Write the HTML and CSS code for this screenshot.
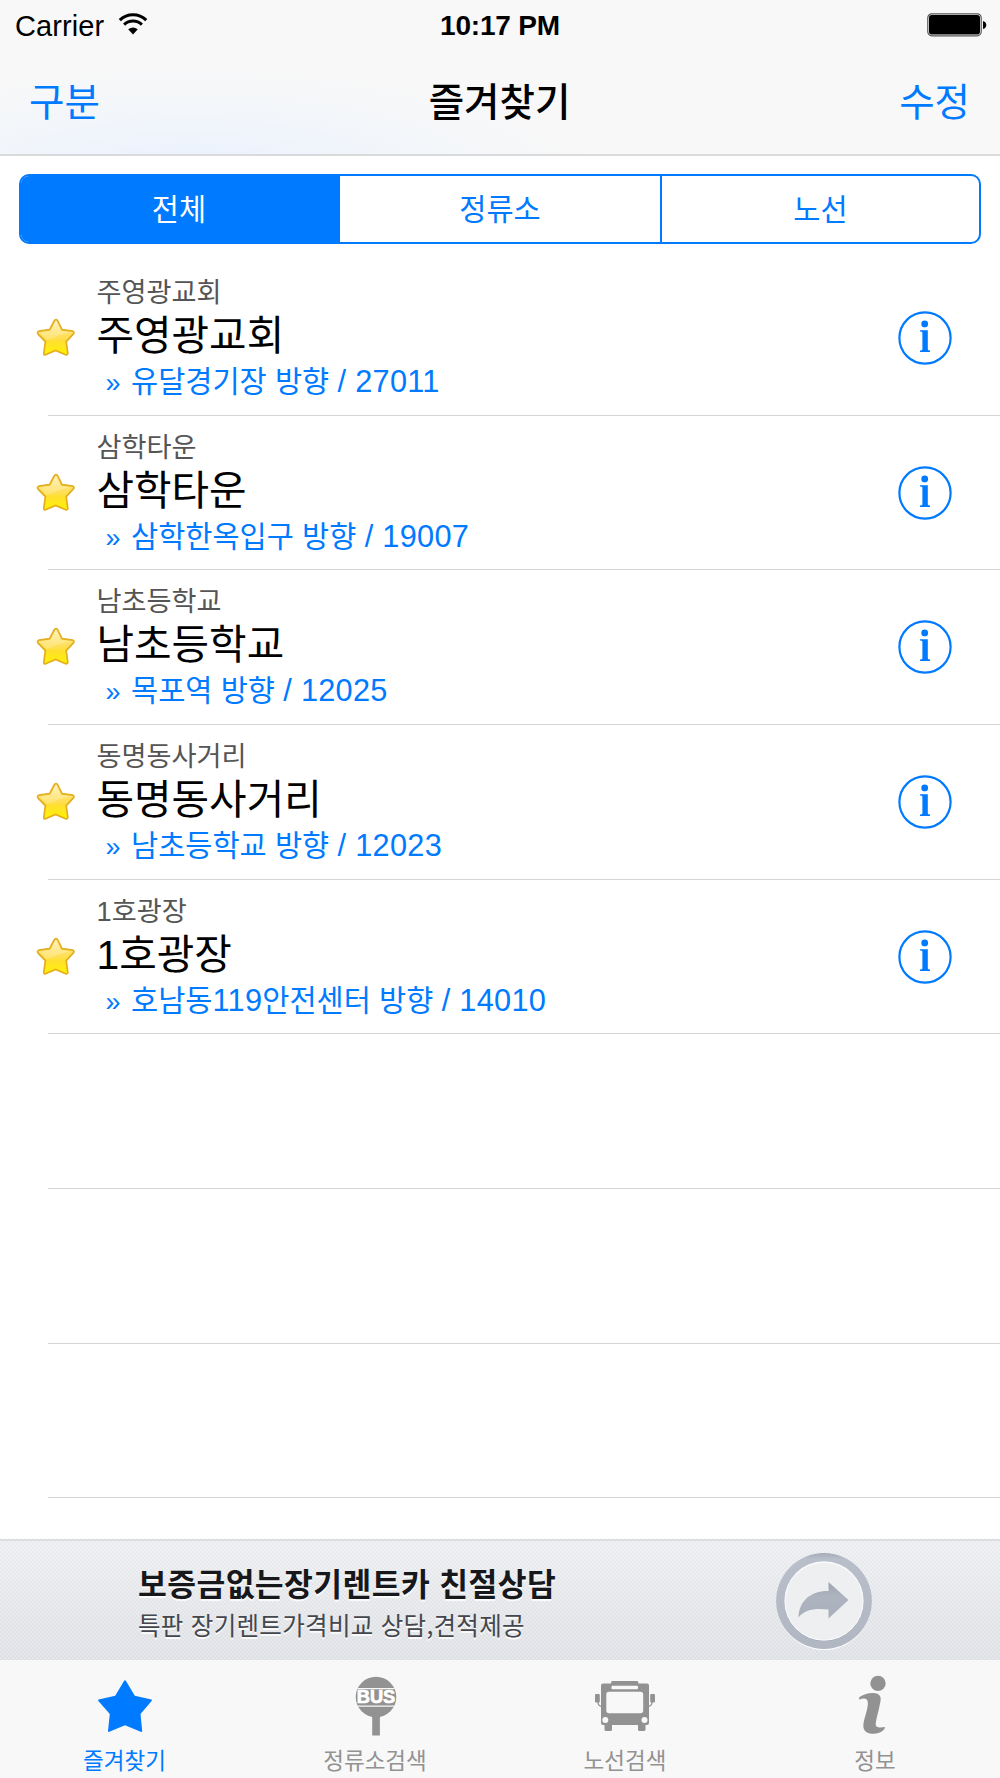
FILE: index.html
```html
<!DOCTYPE html>
<html lang="ko">
<head>
<meta charset="utf-8">
<title>즐겨찾기</title>
<link rel="stylesheet" href="styles.css">
</head>
<body>
<svg class="defs" width="0" height="0" aria-hidden="true">
  <defs>
    <linearGradient id="gold" x1="0" y1="0" x2="0" y2="1">
      <stop offset="0" stop-color="#fff0b4"/>
      <stop offset=".5" stop-color="#ffdf55"/>
      <stop offset=".62" stop-color="#ffe030"/>
      <stop offset="1" stop-color="#fff200"/>
    </linearGradient>
    <symbol id="fav" viewBox="0 0 40 40">
      <path d="M20 2.7 Q21.2 2.7 21.8 4 L26 12.6 L36.8 14.2 Q38.8 15 37.4 16.9 L30.2 24.6 L31.8 36.2 Q31.6 38.3 29.6 37.8 L19.6 33.4 L9.6 37.8 Q7.6 38.2 7.8 36 L9.4 24.6 L1.9 16.9 Q.8 15 2.8 14.2 L13.6 12.6 L18.2 4 Q18.9 2.7 20 2.7Z" fill="url(#gold)" stroke="#e3ae20" stroke-width="1.7"/>
      <path d="M20 5 L24.6 14 L35 15.8 Q27 16 19 20 Q12 23.500 10.500 22.800 L4 15.800 L14.800 14Z" fill="#fff" opacity=".2"/>
    </symbol>
    <symbol id="info" viewBox="0 0 54 54">
      <circle cx="27" cy="27" r="25.600" fill="none" stroke="#007aff" stroke-width="2.200"/>
      <circle cx="26.700" cy="12.900" r="3.400" fill="#007aff"/>
      <path d="M22 19.200 H29.800 V38.600 Q29.900 39.500 32 39.500 V41 H22 V39.500 Q24.400 39.500 24.400 38.600 V21.600 Q24.400 20.600 22 20.500Z" fill="#007aff"/>
    </symbol>
  </defs>
</svg>
<div class="screen">
  <header class="top">
    <div class="status">
      <div class="carrier"><span>Carrier</span>
        <svg class="wifi" width="30" height="22" viewBox="0 0 30 22">
          <path d="M1.800 7.100 A19 19 0 0 1 28.200 7.100" fill="none" stroke="#000" stroke-width="3.100"/>
          <path d="M6.100 11.600 A12.800 12.800 0 0 1 23.900 11.600" fill="none" stroke="#000" stroke-width="2.900"/>
          <path d="M10.200 16.300 Q15 12.600 19.800 16.300 L15 21.600Z"/>
        </svg>
      </div>
      <div class="clock">10:17 PM</div>
      <svg class="battery" width="60" height="24" viewBox="0 0 60 24">
        <rect x=".8" y=".8" width="53.400" height="22" rx="4" fill="#fff" stroke="#555" stroke-width="1.200"/>
        <rect x="2" y="2" width="51" height="19.600" rx="2.800"/>
        <path d="M56 8 Q59.300 9 59.300 12 Q59.300 15 56 16Z"/>
      </svg>
    </div>
    <nav class="navbar"><a class="left">구분</a><h1>즐겨찾기</h1><a class="right">수정</a></nav>
  </header>

  <div class="segments"><span class="on">전체</span><span>정류소</span><span>노선</span></div>

  <main class="list">
    <div class="row"><svg class="fav"><use href="#fav"/></svg>
      <div class="text"><p class="sub">주영광교회</p><p class="name">주영광교회</p><p class="dir"><i>»</i>유달경기장 방향 <b>/ 27011</b></p></div>
      <svg class="info"><use href="#info"/></svg></div>
    <div class="row"><svg class="fav"><use href="#fav"/></svg>
      <div class="text"><p class="sub">삼학타운</p><p class="name">삼학타운</p><p class="dir"><i>»</i>삼학한옥입구 방향 <b>/ 19007</b></p></div>
      <svg class="info"><use href="#info"/></svg></div>
    <div class="row"><svg class="fav"><use href="#fav"/></svg>
      <div class="text"><p class="sub">남초등학교</p><p class="name">남초등학교</p><p class="dir"><i>»</i>목포역 방향 <b>/ 12025</b></p></div>
      <svg class="info"><use href="#info"/></svg></div>
    <div class="row"><svg class="fav"><use href="#fav"/></svg>
      <div class="text"><p class="sub">동명동사거리</p><p class="name">동명동사거리</p><p class="dir"><i>»</i>남초등학교 방향 <b>/ 12023</b></p></div>
      <svg class="info"><use href="#info"/></svg></div>
    <div class="row"><svg class="fav"><use href="#fav"/></svg>
      <div class="text"><p class="sub"><b>1</b>호광장</p><p class="name"><b>1</b>호광장</p><p class="dir"><i>»</i>호남동<b>119</b>안전센터 방향 <b>/ 14010</b></p></div>
      <svg class="info"><use href="#info"/></svg></div>
    <div class="row"></div>
    <div class="row"></div>
    <div class="row"></div>
  </main>

  <aside class="ad">
    <div class="copy"><p class="head">보증금없는장기렌트카 친절상담</p><p class="desc">특판 장기렌트가격비교 상담,견적제공</p></div>
    <svg class="share" width="100" height="100" viewBox="0 0 100 100">
      <defs>
        <linearGradient id="ring" x1="0" y1="0" x2="0" y2="1"><stop offset="0" stop-color="#a5abb5"/><stop offset=".06" stop-color="#b8bfcb"/><stop offset="1" stop-color="#b0b7c2"/></linearGradient>
        <linearGradient id="arrow" x1="0" y1="0" x2="0" y2="1"><stop offset="0" stop-color="#9fa5af"/><stop offset=".4" stop-color="#adb4bf"/><stop offset="1" stop-color="#a9b0bb"/></linearGradient>
      </defs>
      <circle cx="50" cy="51.500" r="47.500" fill="#fafbfc"/>
      <circle cx="50" cy="50" r="47.900" fill="url(#ring)"/>
      <circle cx="50" cy="50.500" r="39.700" fill="#9ea5b0"/>
      <circle cx="50" cy="50" r="39.700" fill="#fafafb"/>
      <circle cx="50" cy="50.300" r="38.500" fill="#eeeff1"/>
      <path d="M24.500 66.500 C25 49 38 39.500 54.500 40 V31 L74.500 49 L54.500 67.500 V58.500 C42 57 31 58 24.500 66.500Z" fill="url(#arrow)"/>
    </svg>
  </aside>

  <footer class="tabs">
    <div class="tab active">
      <svg width="60" height="60" viewBox="0 0 60 60"><path d="M30 4.300 Q30.700 4.300 31 5 L39.800 19.800 L56.400 23.600 Q57.500 24 56.600 25 L45.500 38 L47.200 55 Q47 56.400 45.700 55.800 L30 49.300 L14.300 55.800 Q13 56.300 13 55 L14.800 38 L3.400 25 Q2.600 24 3.700 23.600 L20.200 19.800 L29 5 Q29.300 4.300 30 4.300Z" fill="#007aff"/></svg>
      <span>즐겨찾기</span></div>
    <div class="tab">
      <svg width="60" height="60" viewBox="0 0 60 60"><circle cx="31" cy="21" r="20.300" fill="#929292"/><path d="M27.200 38 H34.900 V59.500 H27.200Z" fill="#929292"/><path d="M12.500 12.700 H49.500 M12.500 30.200 H49.500" stroke="#f8f8f8" stroke-width="1.300"/><text x="31" y="27.300" text-anchor="middle" textLength="38.500" lengthAdjust="spacingAndGlyphs" class="bus">BUS</text></svg>
      <span>정류소검색</span></div>
    <div class="tab">
      <svg width="60" height="60" viewBox="0 0 60 60" fill="#929292"><path fill-rule="evenodd" d="M17 5 H42 Q43.500 5 43.500 7.500 H52 Q54 7.500 54 9.500 V47 Q54 49 52 49 H50.500 V53.500 Q50.500 55 49 55 H44.500 Q43 55 43 53.500 V49 H17 V53.500 Q17 55 15.500 55 H11 Q9.500 55 9.500 53.500 V49 H8 Q6 49 6 47 V9.500 Q6 7.500 8 7.500 H16 Q16 5 17 5Z M17.500 9.700 Q16.500 9.700 16.500 10.700 V12.300 Q16.500 13.300 17.500 13.300 H42 Q43 13.300 43 12.300 V10.700 Q43 9.700 42 9.700Z M14 15.700 Q11.300 15.700 11.300 18.400 V34.500 Q11.300 37.200 14 37.200 H45.500 Q48.200 37.200 48.200 34.500 V18.400 Q48.200 15.700 45.500 15.700Z"/><rect y="18" width="4.800" height="8.500" rx="1"/><rect x="55.200" y="18" width="4.800" height="8.500" rx="1"/><path d="M3 26 Q3 30 7 30.500 M57 26 Q57 30 53 30.500" fill="none" stroke="#929292" stroke-width="1.300"/><circle cx="10.300" cy="44" r="3" fill="#f8f8f8"/><circle cx="49.500" cy="44" r="3" fill="#f8f8f8"/></svg>
      <span>노선검색</span></div>
    <div class="tab">
      <svg width="60" height="60" viewBox="0 0 60 60" fill="#929292"><circle cx="33" cy="7.400" r="7.700"/><path d="M14.200 21.300 C20 17.500 25 17 28 17 C34 17 36.500 20 35.500 25 C34 34 31 43 30.700 48 C30.600 52.500 36 51.500 40 51 L39.300 53.200 C36 57 31 58 27 57.700 C20.500 57.500 17.500 53.500 18.500 47.500 C19.500 41 22.800 34 22.900 27 C22.800 22 19 21.800 14.200 23.700Z"/></svg>
      <span>정보</span></div>
  </footer>
</div>
</body>
</html>
```
FILE: styles.css
```css
* { box-sizing: border-box; margin: 0; padding: 0; }
body { background: #fff; font-family: "Noto Sans CJK KR", sans-serif; color: #000; }
.defs { display: block; height: 0; }
.screen { width: 1000px; height: 1778px; display: flex; flex-direction: column; overflow: hidden; }

.top {
  height: 156px; flex: none; border-bottom: 2px solid #d9dadb;
  background: radial-gradient(ellipse 400px 110px at 190px 175px, #edf3fd 25%, rgba(240, 245, 251, .7) 55%, rgba(248, 248, 248, 0) 100%), #f8f8f8;
}
.status { height: 50px; display: grid; grid-template-columns: 1fr auto 1fr; align-items: center; padding: 2px 13px 0 15px; font-family: "Liberation Sans", sans-serif; }
.carrier { display: flex; align-items: center; gap: 14px; font-size: 29px; letter-spacing: .1px; }
.wifi { margin-top: -5px; }
.clock { font-size: 28px; font-weight: bold; letter-spacing: -.2px; margin-right: 2px; }
.battery { justify-self: end; margin-top: -2px; }
.navbar { height: 104px; display: grid; grid-template-columns: 1fr auto 1fr; align-items: center; padding: 0 30px 6px 29px; font-size: 38.500px; line-height: 60px; }
.navbar a { color: #007aff; }
.navbar .right { text-align: right; }
.navbar h1 { font-size: 38.500px; font-weight: 500; line-height: 60px; }

.segments { flex: none; height: 70px; margin: 18px 19px 17px; display: grid; grid-template-columns: 319px 320px 1fr; border: 2px solid #007aff; border-radius: 10px; overflow: hidden; }
.segments span { display: flex; align-items: center; justify-content: center; color: #007aff; font-size: 29.500px; line-height: 40px; padding-bottom: 5px; }
.segments span + span + span { border-left: 2px solid #007aff; }
.segments .on { background: #007aff; color: #fff; padding-right: 3px; }

.list { flex: 1; min-height: 0; }
.row { height: 154.660px; margin-left: 48px; padding-right: 48px; display: flex; border-bottom: 1.500px solid #d4d4d4; }
.fav { width: 40px; height: 40px; margin: 56px 0 0 -12px; flex: none; }
.text { flex: 1; padding: 11px 0 0 20.500px; white-space: nowrap; }
.sub { font-size: 27.200px; line-height: 36px; height: 36px; color: #555; }
.name { font-size: 40.800px; line-height: 50px; height: 51px; }
.dir { font-size: 29.500px; line-height: 40px; height: 40px; color: #007aff; padding-left: 9px; }
.row b, .row i { font-family: "Liberation Sans", sans-serif; font-weight: normal; font-style: normal; line-height: 1; }
.dir b { font-size: 30.700px; letter-spacing: .3px; }
.dir i { display: inline-block; width: 25.500px; font-size: 27px; }
.info { width: 54px; height: 54px; margin-top: 50px; flex: none; }

.ad {
  height: 121px; flex: none; border-top: 2px solid #dcdde1; display: flex; padding-left: 138px;
  background: repeating-conic-gradient(rgba(150, 158, 170, .07) 0 25%, rgba(255, 255, 255, .1) 0 50%) 0 0 / 4px 4px, linear-gradient(#f0f1f3, #e2e4e8);
}
.copy { width: 636px; padding-top: 19px; text-shadow: 0 2px 0 #fafafa; }
.head { font-size: 31.300px; letter-spacing: .42px; line-height: 46px; font-weight: bold; color: #17181b; }
.desc { font-size: 24.500px; letter-spacing: .3px; line-height: 37px; color: #44474d; }
.share { margin-top: 10px; }

.tabs { height: 118px; flex: none; background: #f8f8f8; display: grid; grid-template-columns: repeat(4, 250px); }
.tab { display: flex; flex-direction: column; align-items: center; padding-top: 16px; color: #929292; font-size: 22.500px; line-height: 34px; }
.tab svg { overflow: visible; margin-bottom: 6px; }
.tab:first-child span { margin-right: 1px; }
.active { color: #007aff; }
.bus { font: bold 17.500px "Liberation Sans", sans-serif; fill: #fff; stroke: #fff; stroke-width: .7px; }
```
